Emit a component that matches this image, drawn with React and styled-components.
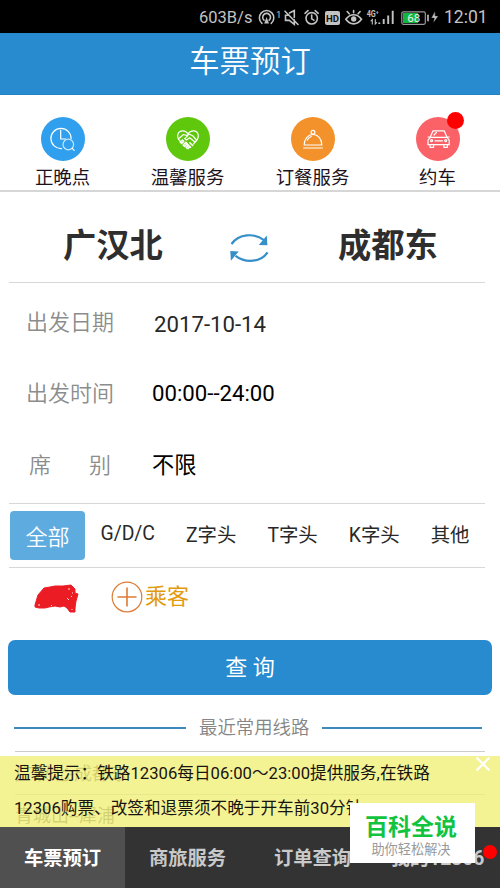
import { useState } from "react";
import styled, { createGlobalStyle } from "styled-components";

const services = [
    { name: "正晚点", color: "#2f9fee", icon: "clock" },
    { name: "温馨服务", color: "#5fc80c", icon: "heart" },
    { name: "订餐服务", color: "#f3922b", icon: "dish" },
    { name: "约车", color: "#fb6268", icon: "car", dot: true },
];

const trainTypes = ["全部", "G/D/C", "Z字头", "T字头", "K字头", "其他"];
const tabs = ["车票预订", "商旅服务", "订单查询", "我的12306"];

const ServiceIcon = ({ name }) => (
    <svg width="44" height="44" viewBox="0 0 44 44" fill="none" stroke="#fff" strokeWidth="1.2" strokeLinecap="round" strokeLinejoin="round">
        {name === "clock" && <>
            <path d="M20.5 31.6a10.1 10.1 0 1 1 9.6-10" />
            <path d="M19.7 13v9h5" />
            <circle cx="27.3" cy="27.5" r="5.3" stroke="#c5e8ff" />
            <path d="m31.2 31.3 2 2" />
        </>}
        {name === "heart" && <>
            <path d="M14 24.2c-4.4-5.2-1.9-10.3 2.6-10.3 2.6 0 4.4 1.3 5.4 3.4 1-2.1 2.8-3.4 5.5-3.4 4.4 0 6.9 5.1 2.5 10.3l-2.7 3" />
            <path d="m13.5 21 4-3.5 3 1 2.5-1.5 4 2 3.7 4.4-1.8 1.6-5.3-4.3-3.2 2.2-1.8-1.3 3.4-3" />
            <path d="m14.2 25 2.2-2 1.3 1.4-2.1 2zm3 3 2.7-2.6 1.3 1.4-2.6 2.5zm3 2.6 2.2-2.2 1.3 1.3-1.8 2zm3.7-4.8 2.7 2.7m-4.5-.6 2.4 2.4" strokeWidth="1.6" />
        </>}
        {name === "dish" && <>
            <circle cx="22" cy="15.2" r="1.9" />
            <path d="M13.2 28c.2-6.6 3.8-10.5 8.8-10.5s8.6 3.9 8.8 10.5zM12.6 31h18.8" />
            <path d="M16.3 23.2c.8-2 2.1-3.2 4-3.7" />
        </>}
        {name === "car" && <>
            <path d="M14.2 20.3 17 13.8h11.2l2.8 6.5M14.2 20.3h16.8l2.2 2.8v4.6H12v-4.6zM12 20h1.8M31.3 20h1.9" />
            <path d="M14 27.8v2.5h3.6v-2.5m10.3 0v2.5h3.5v-2.5M19 23.8h7.4" />
            <circle cx="15.6" cy="23.6" r="1" /><circle cx="29.7" cy="23.6" r="1" />
            <path d="m18 18 2.4-2.5" />
        </>}
    </svg>
);

const StatusIcons = () => (
    <svg width="186" height="33" viewBox="256 0 186 33" fill="none" stroke="#c3c3c3" strokeWidth="1.6" strokeLinecap="round">
        <path d="M262 22.3a7.2 7.2 0 1 1 9.2 0M264 19.2a3.9 3.9 0 1 1 5.2 0" />
        <path d="m266.6 16-2.4 6.5h4.8z" fill="#c3c3c3" stroke="none" />
        <text x="276" y="17" fontSize="9.5" fill="#c3c3c3" stroke="none">1</text>
        <path d="M285 10.2 298 23.5M289 14l-3.5.2v5.2h3.8l5 4v-4.5M289.5 12l4.8-2.5v7" />
        <circle cx="311.7" cy="17.3" r="5.7" />
        <path d="M311.7 14v3.8l2.2 1.4M305 12.3l3-2.7m7.2 0 3 2.7" />
        <rect x="325" y="10" width="15" height="14" rx="2" fill="#c3c3c3" stroke="none" />
        <text x="326" y="20.7" fontSize="9.5" fontWeight="700" fill="#111" stroke="none" textLength="13" lengthAdjust="spacingAndGlyphs">HD</text>
        <path d="M345.8 18.3c4.5-6.1 11.2-6.1 15.7 0-4.5 6.1-11.2 6.1-15.7 0zM347.2 10.5l2 2.3m4.4-3.2v2.2m6.5-1.3-2 2.3" />
        <circle cx="353.7" cy="18" r="2.7" fill="#c3c3c3" stroke="none" />
        <text x="366.7" y="16" fontSize="8.5" fontWeight="700" fill="#c3c3c3" stroke="none" textLength="12" lengthAdjust="spacingAndGlyphs">4G⁺</text>
        <path d="M372.3 23v-4.5l-1.3 1.3m4.3-1.3v4.5l1.3-1.3" strokeWidth="1.1" />
        <path d="M379.3 23v-1.6M383.7 23v-5M388.2 23v-8.5M392.7 23V9.8" strokeWidth="1.9" strokeLinecap="butt" />
        <rect x="401.8" y="10.8" width="23.5" height="12.5" rx="1.5" stroke="#999" strokeWidth="1.2" />
        <path d="M403 12h15v10h-15z" fill="#12b53d" stroke="none" />
        <path d="M428 14.3v5.4" />
        <text x="407.2" y="21.2" fontSize="11.5" fill="#eee" stroke="none">68</text>
        <path d="m435 10.3-3.7 6.8h3l-1 5 5-7.2h-3z" fill="#c3c3c3" stroke="#000" strokeWidth=".4" />
    </svg>
);

const SwapIcon = () => (
    <svg width="40" height="30" viewBox="0 0 40 30" fill="none" stroke="#358fc8" strokeWidth="2.2">
        <path d="M1.5 11C9 .5 24-.2 34 7.2M37.5 19.4C31 29.5 15.5 30.3 5.5 22.8" />
        <path d="m36.8 2.5.6 9.7-8.6-.3zM.9 27.7l-.6-9.7 8.4.4z" fill="#358fc8" stroke="none" />
    </svg>
);

const App = () => {
    const [trainType, setTrainType] = useState("全部");
    const [activeTab, setActiveTab] = useState("车票预订");
    const [showTip, setShowTip] = useState(true);

    return (
        <Phone>
            <GlobalStyle />
            <StatusBar>
                <span>603B/s</span>
                <StatusIcons />
                <Time>12:01</Time>
            </StatusBar>
            <Header>车票预订</Header>
            <Services>
                {services.map((item) => (
                    <Service key={item.name}>
                        <ServiceCircle $color={item.color}>
                            <ServiceIcon name={item.icon} />
                            {item.dot && <RedDot $size={17} $top={-5} $right={-4} />}
                        </ServiceCircle>
                        <p>{item.name}</p>
                    </Service>
                ))}
            </Services>
            <Content>
                <Stations>
                    <h2>广汉北</h2>
                    <SwapIcon />
                    <h2>成都东</h2>
                </Stations>
                <Form>
                    <Field $height={71}>
                        <label>出发日期</label>
                        <FieldValue $color="#282828" $left={2} $top={7}>2017-10-14</FieldValue>
                    </Field>
                    <Field $height={71}>
                        <label>出发时间</label>
                        <FieldValue $top={4}>00:00--24:00</FieldValue>
                    </Field>
                    <Field $height={73}>
                        <SeatLabel><span>席</span><span>别</span></SeatLabel>
                        <FieldValue>不限</FieldValue>
                    </Field>
                </Form>
                <Filters>
                    {trainTypes.map((type) => (
                        <Filter key={type} $active={type === trainType} onClick={() => setTrainType(type)}>{type}</Filter>
                    ))}
                </Filters>
                <Passengers>
                    <svg width="46" height="30" viewBox="0 0 46 30">
                        <path d="M2 21 5 11 11 4 17 3 22 2 30 2 38 1 42 5 42 9 45 10 43 17 42 24 42 28 37 28 34 24 31 22 27 23 22 22 16 23 12 24 6 24 2 23Z" fill="#ec1c24" stroke="#ec1c24" strokeLinejoin="round" />
                        <path d="M6 20v2m12-1 1 1M35 5h2m2 4h1m-6 5 2 2m2-3 1-1m0 13v1" stroke="#ffd9d9" />
                    </svg>
                    <AddPassenger>
                        <svg width="32" height="32" viewBox="0 0 32 32" fill="none" stroke="#dd7c35" strokeWidth="1.2">
                            <circle cx="16" cy="16" r="14.8" />
                            <path d="M6.5 16h19M16 6.5v19" strokeWidth="1.6" />
                        </svg>
                        乘客
                    </AddPassenger>
                </Passengers>
            </Content>
            <QueryButton>查 询</QueryButton>
            <RecentTitle>最近常用线路</RecentTitle>
            <RecentList>
                <li>广汉北-成都东</li>
                <li>青城山--犀浦</li>
            </RecentList>
            {showTip && (
                <Tip>
                    <p>温馨提示：铁路12306每日06:00～23:00提供服务,在铁路</p>
                    <p>12306购票、改签和退票须不晚于开车前30分钟</p>
                    <Close onClick={() => setShowTip(false)}>
                        <svg width="16" height="16" viewBox="0 0 16 16" stroke="#fff" strokeWidth="2.2">
                            <path d="m1.5 1.5 13 13m0-13-13 13" />
                        </svg>
                    </Close>
                </Tip>
            )}
            <TabBar>
                {tabs.map((tab) => (
                    <Tab key={tab} $active={tab === activeTab} onClick={() => setActiveTab(tab)}>{tab}</Tab>
                ))}
                <RedDot $size={14} $top={18} $right={3} />
            </TabBar>
            <Watermark>
                <strong>百科全说</strong>
                <span>助你轻松解决</span>
            </Watermark>
        </Phone>
    );
};

export default App;

const GlobalStyle = createGlobalStyle`
    * {
        box-sizing: border-box;
    }
    body {
        margin: 0;
        font-family: Roboto, "Noto Sans CJK SC", sans-serif;
    }
    h2, p, ul {
        margin: 0;
        padding: 0;
    }
    button {
        font-family: inherit;
        border: none;
        padding: 0;
    }
    svg {
        display: block;
        flex-shrink: 0;
    }
`

const Phone = styled.div`
    position: relative;
    width: 500px;
    height: 888px;
    overflow: hidden;
    background: #fff;
`

const StatusBar = styled.div`
    display: flex;
    align-items: center;
    height: 33px;
    padding: 1px 0 0 199px;
    background: #000;
    color: #c3c3c3;
    font-size: 16.5px;
    white-space: nowrap;
    span:first-child{
        width: 57px;
    }
`

const Time = styled.span`
    margin-left: 2px;
    font-size: 17.5px;
`

const Header = styled.div`
    height: 62px;
    background: #288bcf;
    border-bottom: 1px solid #2580c0;
    color: #fff;
    font-size: 30.4px;
    font-weight: 350;
    line-height: 58px;
    text-align: center;
`

const Services = styled.div`
    display: flex;
    height: 97px;
    padding-top: 22px;
    border-bottom: 2px solid #d6d6d6;
`

const Service = styled.div`
    display: flex;
    flex-direction: column;
    align-items: center;
    width: 125px;
    p{
        font-size: 18.4px;
        line-height: 26px;
        margin-top: 4px;
        color: #1d121b;
    }
`

const ServiceCircle = styled.div`
    position: relative;
    width: 44px;
    height: 44px;
    border-radius: 50%;
    background: ${(props) => props.$color};
`

const RedDot = styled.i`
    position: absolute;
    top: ${(props) => props.$top}px;
    right: ${(props) => props.$right}px;
    width: ${(props) => props.$size}px;
    height: ${(props) => props.$size}px;
    border-radius: 50%;
    background: #f00;
`

const Content = styled.div`
    margin: 0 15px 0 9px;
`

const Stations = styled.div`
    display: flex;
    align-items: center;
    gap: 67.5px;
    height: 91px;
    padding-left: 54px;
    border-bottom: 1px solid #d8d8d8;
    svg{
        margin-top: 21px;
    }
    h2{
        font-size: 33.3px;
        font-weight: 700;
        line-height: 48px;
        color: #2e2e2e;
        padding-top: 17px;
    }
`

const Form = styled.div`
    height: 221px;
    border-bottom: 1px solid #d8d8d8;
`

const Field = styled.div`
    display: flex;
    align-items: center;
    height: ${(props) => props.$height}px;
    padding: 3px 0 0 17px;
    label{
        width: 126px;
        font-size: 22px;
        font-weight: 350;
        color: #8c8c8c;
    }
`

const FieldValue = styled.span`
    font-size: 22.2px;
    color: ${(props) => props.$color || "#000"};
    padding-left: ${(props) => props.$left || 0}px;
    padding-top: ${(props) => props.$top || 0}px;
`

const SeatLabel = styled.label`
    display: flex;
    justify-content: space-between;
    padding: 0 41px 0 3px;
`

const Filters = styled.div`
    display: flex;
    align-items: center;
    height: 64px;
    padding-left: 1px;
    border-bottom: 1px solid #d8d8d8;
`

const Filter = styled.button`
    width: ${(props) => (props.$active ? "75px" : "auto")};
    height: 49px;
    margin-left: ${(props) => (props.$active ? 0 : 15.5)}px;
    margin-right: ${(props) => (props.$active ? 0 : 15.5)}px;
    padding-bottom: ${(props) => (props.$active ? 2 : 5)}px;
    border-radius: 4px;
    background: ${(props) => (props.$active ? "#5eabe0" : "none")};
    color: ${(props) => (props.$active ? "#fff" : "#282828")};
    font-size: ${(props) => (props.$active ? 22 : 19.4)}px;
    font-weight: ${(props) => (props.$active ? 350 : 400)};
    white-space: nowrap;
`

const Passengers = styled.div`
    display: flex;
    height: 72px;
    padding: 13px 0 0 24px;
    > svg{
        margin-top: 3px;
    }
`

const AddPassenger = styled.div`
    display: flex;
    height: 32px;
    margin-left: 32px;
    color: #e29b10;
    font-size: 22px;
    line-height: 32px;
    gap: 2px;
`

const QueryButton = styled.button`
    display: block;
    width: 484px;
    height: 55px;
    margin: 0 auto;
    padding-bottom: 5px;
    border-radius: 7px;
    background: #288bcf;
    color: #fff;
    font-size: 22px;
`

const RecentTitle = styled.div`
    display: flex;
    align-items: center;
    gap: 13px;
    height: 56px;
    padding: 9px 18px 0 14px;
    color: #858585;
    font-size: 18.4px;
    font-weight: 350;
    line-height: 48px;
    &::before, &::after {
        content: "";
        height: 2px;
        background: #3b8abb;
    }
    &::before {
        width: 172px;
    }
    &::after {
        flex: 1;
    }
`

const RecentList = styled.ul`
    height: 76px;
    margin: 0 15px;
    list-style: none;
    li{
        height: 43px;
        border-top: 1px solid #ccc;
        font-size: 18px;
        line-height: 43px;
        color: #555;
    }
    li + li{
        line-height: 42px;
    }
`

const Tip = styled.div`
    position: absolute;
    top: 756px;
    left: 0;
    width: 500px;
    height: 71px;
    padding: 0 14px;
    background: rgba(241, 240, 121, 0.8);
    color: #171411;
    font-size: 16.65px;
    p{
        line-height: 35px;
        white-space: nowrap;
    }
`

const Close = styled.button`
    position: absolute;
    top: 0;
    right: 9px;
    background: none;
`

const TabBar = styled.div`
    position: relative;
    display: flex;
    height: 61px;
    background: #333;
`

const Tab = styled.button`
    width: 125px;
    height: 61px;
    padding-bottom: 2px;
    background: ${(props) => (props.$active ? "#505050" : "#333")};
    color: ${(props) => (props.$active ? "#fff" : "#c9c9c9")};
    font-size: 19.3px;
    font-weight: 700;
    white-space: nowrap;
`

const Watermark = styled.div`
    position: absolute;
    top: 803px;
    left: 350px;
    display: flex;
    flex-direction: column;
    align-items: center;
    width: 125px;
    height: 60px;
    padding: 11px 3px 0 0;
    background: #fff;
    strong{
        color: #12c340;
        font-size: 23px;
        line-height: 28px;
    }
    span{
        color: #999;
        font-size: 13.2px;
        line-height: 15px;
    }
`
